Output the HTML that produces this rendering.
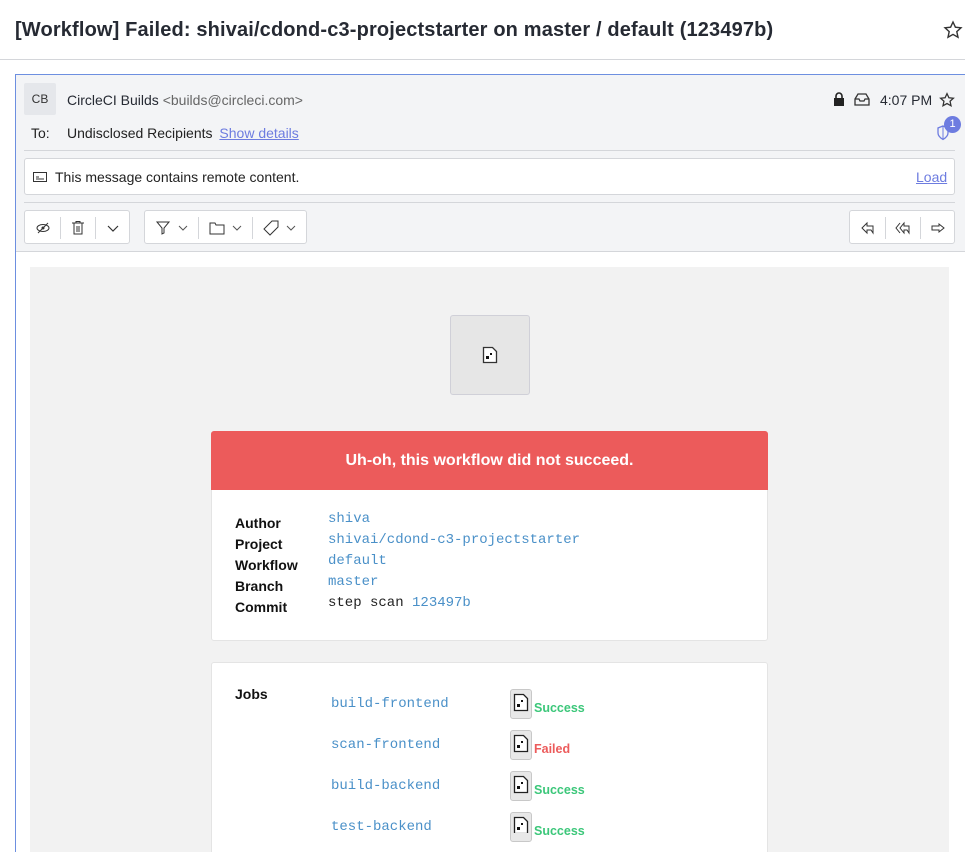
<!DOCTYPE html>
<html style="overflow:hidden;height:852px"><head><meta charset="utf-8"><style>
*{margin:0;padding:0;box-sizing:border-box}
body{width:965px;height:852px;overflow:hidden;background:#fff;font-family:"Liberation Sans","DejaVu Sans",sans-serif;color:#222;position:relative}
.a{position:absolute}
.mono{font-family:"Liberation Mono",monospace;font-size:14px;color:#4a90c8}
.btn{position:absolute;top:210px;height:34px;border:1px solid #d4d6da;border-radius:3px;background:#fff}
.sep{position:absolute;top:6px;width:1px;height:22px;background:#d4d6da}
.ic{position:absolute;top:9px}
.fi{position:absolute;width:22px;height:30px;border:1px solid #c8c8c8;border-radius:3px;background:#e8e8e8}
.st{font-weight:bold;font-size:12.5px}
</style></head><body>
<div class="a" style="left:15px;top:19px;font-size:20px;font-weight:bold;color:#262a33;letter-spacing:0.15px">[Workflow] Failed: shivai/cdond-c3-projectstarter on master / default (123497b)</div>
<svg class="a" style="left:943px;top:20px" width="20" height="20" viewBox="0 0 20 20"><path d="M10 2l2.4 5.2 5.6.6-4.2 3.8 1.2 5.6L10 14.4 5 17.2l1.2-5.6L2 7.8l5.6-.6z" fill="none" stroke="#333" stroke-width="1.4"/></svg>
<div class="a" style="left:0;top:59px;width:965px;height:1px;background:#d4d6da"></div>
<div class="a" style="left:15px;top:74px;width:950px;height:778px;border-left:1px solid #6d8fe0;border-top:1px solid #6d8fe0;background:#fff"></div>
<div class="a" style="left:16px;top:75px;width:949px;height:177px;background:#f3f4f6;border-bottom:1px solid #d4d6da"></div>
<div class="a" style="left:24px;top:83px;width:32px;height:32px;background:#e5e7eb;border-radius:2px;font-size:12px;text-align:center;line-height:32px;color:#333">CB</div>
<div class="a" style="left:67px;top:92px;font-size:14px;color:#262a33">CircleCI Builds <span style="color:#666">&lt;builds@circleci.com&gt;</span></div>
<div class="a" style="left:31px;top:125px;font-size:14px">To:</div>
<div class="a" style="left:67px;top:125px;font-size:14px">Undisclosed Recipients <span style="color:#6d7ce0;text-decoration:underline;margin-left:3px">Show details</span></div>
<svg class="a" style="left:833px;top:92px" width="12" height="14"><rect x="1" y="6" width="10" height="8" fill="#222"/><path d="M3 6V4a3 3 0 0 1 6 0v2" stroke="#222" stroke-width="1.6" fill="none"/></svg>
<svg class="a" style="left:854px;top:93px" width="16" height="13"><path d="M1 6l3-5h8l3 5v6H1zM1 6h4l1 2h4l1-2h4" fill="none" stroke="#333" stroke-width="1.3"/></svg>
<div class="a" style="left:880px;top:92px;font-size:14px;color:#262a33">4:07 PM</div>
<svg class="a" style="left:939px;top:92px" width="16" height="16" viewBox="0 0 20 20"><path d="M10 2l2.4 5.2 5.6.6-4.2 3.8 1.2 5.6L10 14.4 5 17.2l1.2-5.6L2 7.8l5.6-.6z" fill="none" stroke="#333" stroke-width="1.6"/></svg>
<svg class="a" style="left:937px;top:125px" width="12" height="16"><path d="M6 1l5 2v5c0 3-2.5 5-5 6.5C3.5 13 1 11 1 8V3z" fill="none" stroke="#6d7ce0" stroke-width="1.3"/><path d="M6 1v13" stroke="#6d7ce0"/></svg>
<div class="a" style="left:944px;top:116px;width:17px;height:17px;border-radius:50%;background:#6d7ce0;color:#fff;font-size:11px;text-align:center;line-height:17px">1</div>
<div class="a" style="left:24px;top:150px;width:931px;height:1px;background:#d4d6da"></div>
<div class="a" style="left:24px;top:158px;width:931px;height:37px;background:#fff;border:1px solid #d4d6da;border-radius:3px"></div>
<svg class="a" style="left:33px;top:172px" width="14" height="10"><rect x=".5" y=".5" width="13" height="9" fill="none" stroke="#333"/><path d="M3 5h3M3 7h8" stroke="#333"/></svg>
<div class="a" style="left:55px;top:169px;font-size:14px">This message contains remote content.</div>
<div class="a" style="left:916px;top:169px;font-size:14px;color:#6d7ce0;text-decoration:underline">Load</div>
<div class="a" style="left:24px;top:202px;width:931px;height:1px;background:#d4d6da"></div>
<div class="btn" style="left:24px;width:106px"><div class="sep" style="left:35px"></div><div class="sep" style="left:70px"></div>
<svg class="ic" style="left:10px" width="16" height="16"><ellipse cx="8" cy="8" rx="6" ry="3.5" fill="none" stroke="#333"/><circle cx="8" cy="8" r="1.5" fill="#333"/><path d="M3 13L13 3" stroke="#333"/></svg>
<svg class="ic" style="left:45px" width="16" height="16"><path d="M2 3h12M6 3V1.5h4V3M4 3v11h8V3M7 6v6M9 6v6" fill="none" stroke="#333"/></svg>
<svg class="ic" style="left:81px" width="14" height="16"><path d="M2 6l5 5 5-5" fill="none" stroke="#333" stroke-width="1.2"/></svg></div>
<div class="btn" style="left:144px;width:163px"><div class="sep" style="left:53px"></div><div class="sep" style="left:107px"></div>
<svg class="ic" style="left:10px" width="16" height="16"><path d="M2 2h12l-5 6v5l-2 1V8z" fill="none" stroke="#333"/></svg>
<svg class="ic" style="left:33px" width="10" height="16"><path d="M1 6l4 4 4-4" fill="none" stroke="#555"/></svg>
<svg class="ic" style="left:64px" width="16" height="16"><path d="M1 3h5l1 2h8v9H1z" fill="none" stroke="#333"/></svg>
<svg class="ic" style="left:87px" width="10" height="16"><path d="M1 6l4 4 4-4" fill="none" stroke="#555"/></svg>
<svg class="ic" style="left:118px" width="16" height="16"><path d="M9 1h6v6l-8 8-6-6z" fill="none" stroke="#333"/></svg>
<svg class="ic" style="left:141px" width="10" height="16"><path d="M1 6l4 4 4-4" fill="none" stroke="#555"/></svg></div>
<div class="btn" style="left:849px;width:106px"><div class="sep" style="left:35px"></div><div class="sep" style="left:70px"></div>
<svg class="ic" style="left:11px" width="14" height="16"><path d="M6 3L1 8l5 5V10h4l2 3V6H6z" fill="none" stroke="#333"/></svg>
<svg class="ic" style="left:45px" width="16" height="16"><path d="M5 3L1 8l4 5M9 3L5 8l4 5V10h3l2 3V6H9z" fill="none" stroke="#333"/></svg>
<svg class="ic" style="left:81px" width="14" height="16"><path d="M8 4v2H1v4h7v2l5-4z" fill="none" stroke="#333"/></svg></div>
<div class="a" style="left:30px;top:267px;width:919px;height:585px;background:#f2f2f2"></div>
<div class="a" style="left:450px;top:315px;width:80px;height:80px;background:#e6e6e6;border:1px solid #d0d0d8;border-radius:3px"></div>
<svg class="a" style="left:482px;top:346px" width="16" height="18"><path d="M1.5 1.5h9l4 4v11h-13z" fill="#fff" stroke="#333" stroke-width="1.3"/><rect x="4" y="10" width="3" height="3" fill="#111"/><rect x="8" y="7" width="2" height="2" fill="#111"/></svg>
<div class="a" style="left:211px;top:431px;width:557px;height:210px;background:#fff;border:1px solid #e4e4e4;border-radius:3px"></div>
<div class="a" style="left:211px;top:431px;width:557px;height:59px;background:#ec5b5b;border-radius:3px 3px 0 0;color:#fff;font-weight:bold;font-size:16px;text-align:center;line-height:59px">Uh-oh, this workflow did not succeed.</div>
<div class="a" style="left:235px;top:513px;font-weight:bold;font-size:14px;line-height:21px;color:#111">Author<br>Project<br>Workflow<br>Branch<br>Commit</div>
<div class="a mono" style="left:328px;top:509px;line-height:21px">shiva<br>shivai/cdond-c3-projectstarter<br>default<br>master<br><span style="color:#222">step scan</span> 123497b</div>
<div class="a" style="left:211px;top:662px;width:557px;height:200px;background:#fff;border:1px solid #e4e4e4;border-radius:3px"></div>
<div class="a" style="left:235px;top:686px;font-weight:bold;font-size:14px;color:#111">Jobs</div>
<div class="a mono" style="left:331px;top:696px">build-frontend</div>
<div class="a mono" style="left:331px;top:737px">scan-frontend</div>
<div class="a mono" style="left:331px;top:778px">build-backend</div>
<div class="a mono" style="left:331px;top:819px">test-backend</div>
<div class="fi" style="left:510px;top:689px"></div><div class="fi" style="left:510px;top:730px"></div><div class="fi" style="left:510px;top:771px"></div><div class="fi" style="left:510px;top:812px"></div>
<svg class="a" style="left:513px;top:693px" width="16" height="140"><g id="g"><path d="M1.5 1.5h9l4 4v12h-13z" fill="#fff" stroke="#222" stroke-width="1.3"/><rect x="4" y="11" width="3" height="3" fill="#111"/><rect x="8" y="7" width="2" height="2" fill="#111"/></g><use href="#g" y="41"/><use href="#g" y="82"/><use href="#g" y="123"/></svg>
<div class="a st" style="left:534px;top:701px;color:#3cc77a">Success</div>
<div class="a st" style="left:534px;top:742px;color:#ec5b5b">Failed</div>
<div class="a st" style="left:534px;top:783px;color:#3cc77a">Success</div>
<div class="a st" style="left:534px;top:824px;color:#3cc77a">Success</div>
</body></html>
